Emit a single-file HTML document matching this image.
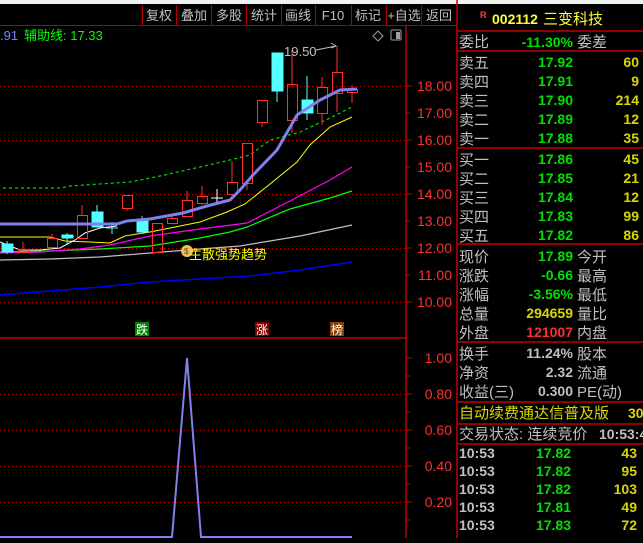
<!DOCTYPE html><html><head><meta charset="utf-8"><style>
body{margin:0;background:#000;width:643px;height:538px;overflow:hidden;font-family:"Liberation Sans","Noto Sans CJK SC",sans-serif}
svg text{font-family:"Liberation Sans","Noto Sans CJK SC",sans-serif}
.l{fill:#c0c0c0;font-size:15px}
.g{fill:#00e000;font-size:14px;font-weight:bold}
.y{fill:#d8d800;font-size:14px;font-weight:bold}
.w{fill:#c0c0c0;font-size:14px;font-weight:bold}
</style></head><body>
<svg width="643" height="538" viewBox="0 0 643 538" xmlns="http://www.w3.org/2000/svg">
<rect x="0" y="0" width="643" height="4" fill="#f0f0f0"/>
<!-- toolbar -->
<g stroke="#b00000" stroke-width="1">
<line x1="0" y1="25.5" x2="457" y2="25.5"/>
<line x1="142.5" y1="5" x2="142.5" y2="25"/><line x1="176.5" y1="5" x2="176.5" y2="25"/><line x1="211.5" y1="5" x2="211.5" y2="25"/><line x1="246.5" y1="5" x2="246.5" y2="25"/><line x1="281.5" y1="5" x2="281.5" y2="25"/><line x1="315.5" y1="5" x2="315.5" y2="25"/><line x1="351.5" y1="5" x2="351.5" y2="25"/><line x1="386.5" y1="5" x2="386.5" y2="25"/><line x1="421.5" y1="5" x2="421.5" y2="25"/>
</g>
<g fill="#c0c0c0" font-size="13" text-anchor="middle">
<text x="159" y="20">复权</text><text x="194" y="20">叠加</text><text x="229" y="20">多股</text><text x="264" y="20">统计</text><text x="298" y="20">画线</text><text x="333" y="20">F10</text><text x="368" y="20">标记</text><text x="404" y="20">+自选</text><text x="439" y="20">返回</text>
</g>
<!-- frame -->
<g stroke="#c00000" stroke-width="1.5" fill="none">
<line x1="406" y1="26" x2="406" y2="538"/>
<line x1="457" y1="0" x2="457" y2="538"/>
<line x1="0" y1="338" x2="406" y2="338"/>
</g>
<g stroke="#c00000" stroke-width="1">
<line x1="406" y1="86" x2="412" y2="86"/><line x1="406" y1="113" x2="410" y2="113"/><line x1="406" y1="140" x2="412" y2="140"/><line x1="406" y1="167" x2="410" y2="167"/><line x1="406" y1="194" x2="412" y2="194"/><line x1="406" y1="221" x2="410" y2="221"/><line x1="406" y1="248" x2="412" y2="248"/><line x1="406" y1="275" x2="410" y2="275"/><line x1="406" y1="302" x2="412" y2="302"/>
<line x1="406" y1="358" x2="412" y2="358"/><line x1="406" y1="376" x2="410" y2="376"/><line x1="406" y1="394" x2="412" y2="394"/><line x1="406" y1="412" x2="410" y2="412"/><line x1="406" y1="430" x2="412" y2="430"/><line x1="406" y1="448" x2="410" y2="448"/><line x1="406" y1="466" x2="412" y2="466"/><line x1="406" y1="484" x2="410" y2="484"/><line x1="406" y1="502" x2="412" y2="502"/><line x1="406" y1="520" x2="410" y2="520"/>
</g>
<g stroke="#c00000" stroke-width="1" stroke-dasharray="1,3">
<line x1="0" y1="86.5" x2="406" y2="86.5"/><line x1="0" y1="140.5" x2="406" y2="140.5"/><line x1="0" y1="194.5" x2="406" y2="194.5"/><line x1="0" y1="248.5" x2="406" y2="248.5"/><line x1="0" y1="302.5" x2="406" y2="302.5"/>
<line x1="0" y1="394.5" x2="406" y2="394.5"/><line x1="0" y1="430.5" x2="406" y2="430.5"/><line x1="0" y1="466.5" x2="406" y2="466.5"/><line x1="0" y1="502.5" x2="406" y2="502.5"/>
</g>
<g fill="#ff3030" font-size="14" text-anchor="end">
<text x="452" y="91">18.00</text><text x="452" y="118">17.00</text><text x="452" y="145">16.00</text><text x="452" y="172">15.00</text><text x="452" y="199">14.00</text><text x="452" y="226">13.00</text><text x="452" y="253">12.00</text><text x="452" y="280">11.00</text><text x="452" y="307">10.00</text>
<text x="452" y="363">1.00</text><text x="452" y="399">0.80</text><text x="452" y="435">0.60</text><text x="452" y="471">0.40</text><text x="452" y="507">0.20</text>
</g>
<text x="0" y="40" font-size="13" fill="#8080ff">.91</text>
<text x="24" y="40" font-size="13" fill="#00ff00">辅助线: 17.33</text>
<path d="M378 31 L383 36 L378 41 L373 36 Z" fill="none" stroke="#a0a0a0"/>
<rect x="391" y="30" width="10" height="10" fill="none" stroke="#a0a0a0" rx="1"/><rect x="396" y="32" width="4" height="7" fill="#a0a0a0"/>
<!-- MA lines -->
<polyline fill="none" stroke="#0000ff" stroke-width="1.5" points="0,295 100,287 150,282 200,279 250,276 300,270 352,262"/>
<polyline fill="none" stroke="#c0c0c0" stroke-width="1.2" points="0,260 50,259 100,257 150,253 200,249 240,246 300,236 352,225"/>
<polyline fill="none" stroke="#00ff00" stroke-width="1.2" points="0,252 50,251 100,249 150,246 200,238 230,232 247,227 290,209 330,198 352,191"/>
<polyline fill="none" stroke="#ff00ff" stroke-width="1.2" points="0,253 40,252 80,249 110,245 150,236 200,229 247,223 290,201 330,180 352,167"/>
<polyline fill="none" stroke="#ffff00" stroke-width="1" points="0,237 50,237 65,241 90,242 110,243 125,236 150,232 200,222 227,212 245,204 270,184 297,162 310,145 330,127 352,117"/>
<polyline fill="none" stroke="#ffffff" stroke-width="1" points="0,242 20,250 40,250 60,248 75,240 85,233 100,228 117,226"/>
<polyline fill="none" stroke="#00e000" stroke-width="1.2" stroke-dasharray="3,3" points="3,188 60,188 70,186 130,182 160,176 200,167 230,160 250,155 270,140 300,132 330,118 352,107"/>
<!-- candles -->
<g stroke="#ff3030" stroke-width="1" fill="none">
<line x1="23" y1="242" x2="23" y2="249"/><rect x="18.5" y="249.5" width="10" height="3"/>
<line x1="52" y1="234" x2="52" y2="238"/><rect x="47.5" y="238.5" width="10" height="9"/>
<line x1="82" y1="205" x2="82" y2="215"/><rect x="77.5" y="215.5" width="10" height="23"/>
<line x1="127" y1="208" x2="127" y2="211"/><rect x="122.5" y="195.5" width="10" height="13"/>
<rect x="152.5" y="223.5" width="10" height="29"/>
<line x1="172" y1="215" x2="172" y2="218"/><rect x="167.5" y="218.5" width="10" height="5"/>
<line x1="187" y1="191" x2="187" y2="200"/><rect x="182.5" y="200.5" width="10" height="16"/>
<line x1="202" y1="186" x2="202" y2="196"/><line x1="202" y1="203" x2="202" y2="205"/><rect x="197.5" y="196.5" width="10" height="7"/>
<line x1="232" y1="161" x2="232" y2="182"/><line x1="232" y1="194" x2="232" y2="197"/><rect x="227.5" y="182.5" width="10" height="12"/>
<line x1="247" y1="183" x2="247" y2="190"/><rect x="242.5" y="143.5" width="10" height="40"/>
<line x1="262" y1="122" x2="262" y2="127"/><rect x="257.5" y="100.5" width="10" height="22"/>
<line x1="292" y1="50" x2="292" y2="84"/><line x1="292" y1="120" x2="292" y2="133"/><rect x="287.5" y="84.5" width="10" height="36"/>
<line x1="322" y1="77" x2="322" y2="87"/><line x1="322" y1="113" x2="322" y2="125"/><rect x="317.5" y="87.5" width="10" height="26"/>
<line x1="337" y1="46" x2="337" y2="72"/><line x1="337" y1="93" x2="337" y2="112"/><rect x="332.5" y="72.5" width="10" height="21"/>
<line x1="352" y1="85" x2="352" y2="89"/><line x1="352" y1="92" x2="352" y2="103"/><rect x="347.5" y="89.5" width="10" height="3"/>
</g>
<g fill="#55ffff" stroke="#55ffff" stroke-width="1">
<rect x="2" y="244" width="11" height="8"/><line x1="7" y1="241" x2="7" y2="254"/>
<rect x="62" y="235" width="11" height="3"/><line x1="67" y1="233" x2="67" y2="245"/>
<rect x="92" y="212" width="11" height="15"/><line x1="97" y1="205" x2="97" y2="212"/>
<rect x="137" y="221" width="11" height="11"/><line x1="142" y1="216" x2="142" y2="221"/>
<rect x="272" y="53" width="11" height="38"/><line x1="277" y1="91" x2="277" y2="102"/>
<rect x="302" y="100" width="11" height="13"/><line x1="307" y1="76" x2="307" y2="120"/>
<line x1="106" y1="228" x2="118" y2="228" stroke="#55ffff"/>
</g>
<line x1="112" y1="222" x2="112" y2="234" stroke="#55ffff"/>
<g stroke="#ffffff"><line x1="211" y1="198" x2="223" y2="198"/><line x1="217" y1="189" x2="217" y2="205"/></g>
<polyline fill="none" stroke="#8080ee" stroke-width="3" points="0,224 117,224 127,221 150,219 183,213 207,206 230,200 240,190 253,175 277,150 297,115 320,100 340,90 357,89"/>
<text x="284" y="56" font-size="13" fill="#c0c0c0">19.50</text>
<path d="M316 50 L336 46 M331 43 L336 46 L331 48" fill="none" stroke="#c0c0c0"/>
<!-- annotation -->
<circle cx="187" cy="251" r="6" fill="#e8c060"/><text x="184" y="254" font-size="8" fill="#704000">$</text>
<text x="189" y="259" font-size="13" fill="#ffff00">主散强势趋势</text>
<rect x="135" y="322" width="14" height="14" fill="#008000"/><text x="136" y="334" font-size="12" fill="#fff">跌</text>
<rect x="255" y="322" width="14" height="14" fill="#800000"/><text x="256" y="334" font-size="12" fill="#fff">涨</text>
<rect x="330" y="322" width="14" height="14" fill="#8a4000"/><text x="331" y="334" font-size="12" fill="#fff">榜</text>
<!-- lower -->
<polyline fill="none" stroke="#8080ee" stroke-width="2" points="0,537 172,537 187,358 201,537 352,537"/>
<!-- right panel -->
<g stroke="#c00000" stroke-width="1.5">
<line x1="457" y1="31" x2="643" y2="31"/><line x1="457" y1="51" x2="643" y2="51"/><line x1="457" y1="148" x2="643" y2="148"/><line x1="457" y1="244" x2="643" y2="244"/><line x1="457" y1="342" x2="643" y2="342"/><line x1="457" y1="402" x2="643" y2="402"/><line x1="457" y1="424" x2="643" y2="424"/><line x1="457" y1="444" x2="643" y2="444"/>
</g>
<text x="480" y="18" font-size="9" font-weight="bold" fill="#ff4040">R</text>
<text x="492" y="24" font-size="14" font-weight="bold" fill="#ffff40">002112</text>
<text x="543" y="24" font-size="15" fill="#ffff40">三变科技</text>
<text x="459" y="47" class="l">委比</text><text x="573" y="47" class="g" text-anchor="end">-11.30%</text><text x="577" y="47" class="l">委差</text>
<g>
<text x="459" y="68" class="l">卖五</text><text x="573" y="67" class="g" text-anchor="end">17.92</text><text x="639" y="67" class="y" text-anchor="end">60</text>
<text x="459" y="87" class="l">卖四</text><text x="573" y="86" class="g" text-anchor="end">17.91</text><text x="639" y="86" class="y" text-anchor="end">9</text>
<text x="459" y="106" class="l">卖三</text><text x="573" y="105" class="g" text-anchor="end">17.90</text><text x="639" y="105" class="y" text-anchor="end">214</text>
<text x="459" y="125" class="l">卖二</text><text x="573" y="124" class="g" text-anchor="end">17.89</text><text x="639" y="124" class="y" text-anchor="end">12</text>
<text x="459" y="144" class="l">卖一</text><text x="573" y="143" class="g" text-anchor="end">17.88</text><text x="639" y="143" class="y" text-anchor="end">35</text>
<text x="459" y="165" class="l">买一</text><text x="573" y="164" class="g" text-anchor="end">17.86</text><text x="639" y="164" class="y" text-anchor="end">45</text>
<text x="459" y="184" class="l">买二</text><text x="573" y="183" class="g" text-anchor="end">17.85</text><text x="639" y="183" class="y" text-anchor="end">21</text>
<text x="459" y="203" class="l">买三</text><text x="573" y="202" class="g" text-anchor="end">17.84</text><text x="639" y="202" class="y" text-anchor="end">12</text>
<text x="459" y="222" class="l">买四</text><text x="573" y="221" class="g" text-anchor="end">17.83</text><text x="639" y="221" class="y" text-anchor="end">99</text>
<text x="459" y="241" class="l">买五</text><text x="573" y="240" class="g" text-anchor="end">17.82</text><text x="639" y="240" class="y" text-anchor="end">86</text>
<text x="459" y="262" class="l">现价</text><text x="573" y="261" class="g" text-anchor="end">17.89</text><text x="577" y="262" class="l">今开</text>
<text x="459" y="281" class="l">涨跌</text><text x="573" y="280" class="g" text-anchor="end">-0.66</text><text x="577" y="281" class="l">最高</text>
<text x="459" y="300" class="l">涨幅</text><text x="573" y="299" class="g" text-anchor="end">-3.56%</text><text x="577" y="300" class="l">最低</text>
<text x="459" y="319" class="l">总量</text><text x="573" y="318" class="y" text-anchor="end">294659</text><text x="577" y="319" class="l">量比</text>
<text x="459" y="338" class="l">外盘</text><text x="573" y="337" class="y" text-anchor="end" style="fill:#ff3030">121007</text><text x="577" y="338" class="l">内盘</text>
<text x="459" y="359" class="l">换手</text><text x="573" y="358" class="w" text-anchor="end">11.24%</text><text x="577" y="359" class="l">股本</text>
<text x="459" y="378" class="l">净资</text><text x="573" y="377" class="w" text-anchor="end">2.32</text><text x="577" y="378" class="l">流通</text>
<text x="459" y="397" class="l">收益(三)</text><text x="573" y="396" class="w" text-anchor="end">0.300</text><text x="577" y="397" class="l">PE(动)</text>
<text x="459" y="418" font-size="15" fill="#d8d800">自动续费通达信普及版</text><text x="628" y="418" class="y">30</text>
<text x="459" y="439" class="l">交易状态: 连续竞价</text><text x="599" y="439" class="w">10:53:4</text>
<text x="459" y="458" class="w">10:53</text><text x="571" y="458" class="g" text-anchor="end">17.82</text><text x="637" y="458" class="y" text-anchor="end">43</text>
<text x="459" y="476" class="w">10:53</text><text x="571" y="476" class="g" text-anchor="end">17.82</text><text x="637" y="476" class="y" text-anchor="end">95</text>
<text x="459" y="494" class="w">10:53</text><text x="571" y="494" class="g" text-anchor="end">17.82</text><text x="637" y="494" class="y" text-anchor="end">103</text>
<text x="459" y="512" class="w">10:53</text><text x="571" y="512" class="g" text-anchor="end">17.81</text><text x="637" y="512" class="y" text-anchor="end">49</text>
<text x="459" y="530" class="w">10:53</text><text x="571" y="530" class="g" text-anchor="end">17.83</text><text x="637" y="530" class="y" text-anchor="end">72</text>
</g>
</svg>
</body></html>
